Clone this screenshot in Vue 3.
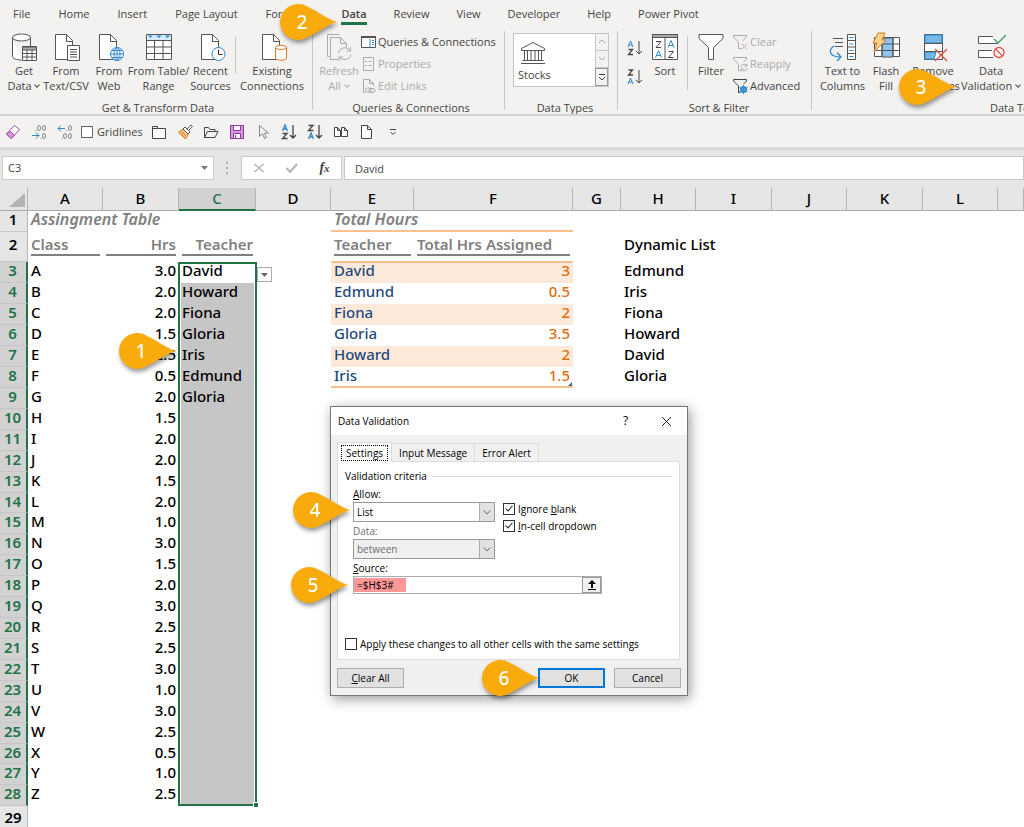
<script setup>
import { ref } from 'vue'

const tabs = ['File', 'Home', 'Insert', 'Page Layout', 'Formulas', 'Data', 'Review', 'View', 'Developer', 'Help', 'Power Pivot']
const activeTab = ref('Data')

const columns = ['A', 'B', 'C', 'D', 'E', 'F', 'G', 'H', 'I', 'J', 'K', 'L', 'M']
const hours = ['3.0', '2.0', '2.0', '1.5', '2.5', '0.5', '2.0', '1.5', '2.0', '2.0', '1.5', '2.0', '1.0', '3.0', '1.5', '2.0', '3.0', '2.5', '2.5', '3.0', '1.0', '3.0', '2.5', '0.5', '1.0', '2.5']
const teachers = ['David', 'Howard', 'Fiona', 'Gloria', 'Iris', 'Edmund', 'Gloria']
const totals = [['David', '3'], ['Edmund', '0.5'], ['Fiona', '2'], ['Gloria', '3.5'], ['Howard', '2'], ['Iris', '1.5']]
const dynamicList = ['Edmund', 'Iris', 'Fiona', 'Howard', 'David', 'Gloria']

const rows = hours.map((hrs, i) => ({
  number: i + 3,
  name: String.fromCharCode(65 + i),
  hrs,
  teacher: teachers[i] || '',
  total: totals[i] || null,
  item: dynamicList[i] || '',
}))

const callouts = [1, 2, 3, 4, 5, 6]
const allow = ref('List')
const operator = ref('between')
const source = ref('=$H$3#')
const ignoreBlank = ref(true)
const inCell = ref(true)
const applyAll = ref(false)
const cellValue = ref('David')
const cellName = ref('C3')
const gridlines = ref(false)
</script>

<template>
  <div class="excel">
    <nav class="tabs">
      <button v-for="t in tabs" :key="t" class="tab" :class="{ active: t === activeTab }" @click="activeTab = t">{{ t }}</button>
    </nav>

    <div class="ribbon">
      <section class="group g-get">
        <div class="tools">
          <button class="big w40">
            <svg width="28" height="28" viewBox="0 0 28 28" fill="none" stroke="#555"><path d="M2.500 4.500v19c0 2 4 3.500 9 3.500" fill="#fff"/><path d="M20.500 4.500v9"/><ellipse cx="11.500" cy="4.500" rx="9" ry="3.500" fill="#fff"/><path d="M12.500 13.500h14v14h-14z" fill="#fff"/><path d="M12.500 14h14v3h-14z" fill="#aaa"/><path d="M12.500 20.500h14M12.500 24h14M17 17v10M22 17v10"/></svg>
            <span>Get<br>Data <i class="chev"></i></span>
          </button>
          <button class="big w44">
            <svg width="28" height="28" viewBox="0 0 28 28" fill="none" stroke="#555"><path d="M3.500 1.500h11l6 6v19h-17z" fill="#fff"/><path d="M14.500 1.500v7h6"/><path d="M15.500 12.500h12v15h-12z" fill="#fff"/><path d="M18 16.500h7M18 19h7M18 21.500h7M18 24h7"/></svg>
            <span>From<br>Text/CSV</span>
          </button>
          <button class="big w42">
            <svg width="28" height="28" viewBox="0 0 28 28" fill="none" stroke="#555"><path d="M4.500 1.500h11l6 6v19h-17z" fill="#fff"/><path d="M15.500 1.500v7h6"/><g stroke="#2b8ad0"><circle cx="22" cy="21" r="6.500" fill="#fff"/><ellipse cx="22" cy="21" rx="3" ry="6.500"/><path d="M22 14.500v13M15.500 21h13M16.500 17.500h11M16.500 24.500h11"/></g></svg>
            <span>From<br>Web</span>
          </button>
          <button class="big w57">
            <svg width="28" height="28" viewBox="0 0 28 28" fill="none" stroke="#555"><path d="M1.500 1.500h25v25h-25z" fill="#fff"/><path d="M2 2h24v5H2z" fill="#d6eaf8" stroke="none"/><path d="M3 2.500h4.500l-2 2.500zM11.500 2.500h5l-2.500 2.500zM20 2.500h5l-2.500 2.500z" fill="#2b8ad0" stroke="none"/><path d="M1.500 7.500h25M1.500 14h25M1.500 20.500h25M9.500 7v19M18 7v19"/></svg>
            <span>From Table/<br>Range</span>
          </button>
          <button class="big w47">
            <svg width="28" height="28" viewBox="0 0 28 28" fill="none" stroke="#555"><path d="M4.500 1.500h11l6 6v19h-17z" fill="#fff"/><path d="M15.500 1.500v7h6"/><circle cx="21.500" cy="21" r="6.500" fill="#fff" stroke="#2b8ad0"/><path d="M21.500 16.500v5h4" stroke="#333"/></svg>
            <span>Recent<br>Sources</span>
          </button>
          <i class="rule"></i>
          <button class="big w68">
            <svg width="28" height="28" viewBox="0 0 28 28" fill="none" stroke="#555"><path d="M4.500 1.500h11l6 6v19h-17z" fill="#fff"/><path d="M15.500 1.500v7h6"/><g stroke="#dd7a26"><path d="M17.500 15v10c0 3 11 3 11 0V15" fill="#fff"/><ellipse cx="23" cy="14.500" rx="5.500" ry="2" fill="#fff"/></g></svg>
            <span>Existing<br>Connections</span>
          </button>
        </div>
        <h2>Get &amp; Transform Data</h2>
      </section>

      <section class="group g-query">
        <div class="tools">
          <button class="big w42" disabled>
            <svg width="28" height="28" viewBox="0 0 28 28" fill="none" stroke="#aaa"><path d="M4.500 23.500h-2v-22h12"/><path d="M5.500 4.500h10l6 6v4M5.500 4.500v22h8" /><path d="M15.500 4.500v6h6M13.500 20c1-6 9-7 12-2v-4m0 4h-4M26 22c-1 5-9 6-12 2v4m0-4h4"/></svg>
            <span>Refresh<br>All <i class="chev"></i></span>
          </button>
          <div class="smalls">
            <button class="small"><svg width="16" height="16" viewBox="0 0 16 16" fill="none" stroke="#555"><path d="M1.500 2.500h14v11h-14z" fill="#fff"/><path d="M1 3h15" stroke-width="2"/><path d="M10 5v8" stroke="#2b8ad0"/><path d="M12 6.500h2M12 8.500h2M12 10.500h2" stroke="#2b8ad0"/></svg>Queries &amp; Connections</button>
            <button class="small" disabled><svg width="16" height="16" viewBox="0 0 16 16" fill="none" stroke="#aaa"><path d="M3.500 1.500h10v13h-10z"/><path d="M5 5.500h2M5 9.500h2M8.500 5.500h3M8.500 9.500h3"/></svg>Properties</button>
            <button class="small" disabled><svg width="16" height="16" viewBox="0 0 16 16" fill="none" stroke="#aaa"><path d="M5 14.500H3.500v-13h6l4 4V8M9.500 1.500v4h4"/><rect x="5.500" y="10" width="6" height="4" rx="2"/><rect x="9" y="10.500" width="6" height="4" rx="2"/></svg>Edit Links</button>
          </div>
        </div>
        <h2>Queries &amp; Connections</h2>
      </section>

      <section class="group g-types">
        <div class="tools">
          <div class="gallery">
            <button class="stocks">
              <svg width="26" height="24" viewBox="0 0 26 24" fill="none" stroke="#555"><path d="M1.500 7.500L13 1.500l11.500 6v2h-23zM4.500 9.500v10M7.500 9.500v10M11 9.500v10M15 9.500v10M18.500 9.500v10M21.500 9.500v10M2.500 19.500h21M1 22.500h24"/></svg>
              <span>Stocks</span>
            </button>
            <div class="steps">
              <button aria-label="Previous"><svg width="8" height="6" viewBox="0 0 8 6" fill="none" stroke="#aaa"><path d="M1 4l3-3 3 3"/></svg></button>
              <button aria-label="Next"><svg width="8" height="6" viewBox="0 0 8 6" fill="none" stroke="#aaa"><path d="M1 1l3 3 3-3"/></svg></button>
              <button aria-label="More" class="more"><svg width="8" height="8" viewBox="0 0 8 8" fill="none" stroke="#444"><path d="M1 1.500h6M1 4l3 3 3-3"/></svg></button>
            </div>
          </div>
        </div>
        <h2>Data Types</h2>
      </section>

      <section class="group g-sort">
        <div class="tools">
          <div class="azs">
            <button aria-label="Sort A to Z"><svg width="16" height="18" viewBox="0 0 16 18" fill="none" stroke="#444"><path d="M1 8l2.500-6L6 8M2 6h3" stroke="#2b8ad0"/><path d="M1.500 10.500h4l-4 5h4.500" stroke-width="1.300"/><path d="M12 2v13M9 12l3 3 3-3"/></svg></button>
            <button aria-label="Sort Z to A"><svg width="16" height="18" viewBox="0 0 16 18" fill="none" stroke="#444"><path d="M1.500 2h4l-4 5h4.500" stroke-width="1.300"/><path d="M1 16l2.500-6L6 16M2 14h3" stroke="#2b8ad0"/><path d="M12 2v13M9 12l3 3 3-3"/></svg></button>
          </div>
          <button class="big w42">
            <svg width="28" height="28" viewBox="0 0 28 28" fill="none" stroke="#555"><path d="M1.500 1.500h25v25h-25z" fill="#fff"/><path d="M1.500 1.500h25v3h-25z" fill="#aaa"/><path d="M14 5v21"/><path d="M5 8.500h5l-5 6h5M17.500 18.500h5l-5 6h5" stroke="#444"/><path d="M4.500 24.500l3-7 3 7M5.500 22.500h4M17 14.500l3-7 3 7M18 12.500h4" stroke="#2b8ad0"/></svg>
            <span>Sort</span>
          </button>
          <i class="rule tall"></i>
          <button class="big w42">
            <svg width="28" height="28" viewBox="0 0 28 28" fill="none" stroke="#555"><path d="M2 1.500h24v4l-9.500 9v12h-5v-12L2 5.500z" fill="#fff"/></svg>
            <span>Filter</span>
          </button>
          <div class="smalls">
            <button class="small" disabled><svg width="16" height="16" viewBox="0 0 16 16" fill="none" stroke="#aaa"><path d="M9.500 14.500h-3V8l-5-5V1.500h13V3l-4 4"/><path d="M10 10l5 5M15 10l-5 5"/></svg>Clear</button>
            <button class="small" disabled><svg width="16" height="16" viewBox="0 0 16 16" fill="none" stroke="#aaa"><path d="M7.500 14.500h-1V8l-5-5V1.500h13V3l-3 3"/><path d="M9 11c1-4 5-3 6-1V7.500M15 10h-2.500M15 12c-1 4-5 3-6 1v2.500M9 13h2.500"/></svg>Reapply</button>
            <button class="small"><svg width="16" height="16" viewBox="0 0 16 16" fill="none" stroke="#444"><path d="M6.500 14.500V8l-5-5V1.500h13V3l-3 3M6.500 14.500h2"/><circle cx="11.500" cy="11.500" r="2.500" stroke="#2b8ad0" stroke-width="2"/><path d="M11.500 7v9M7.500 9.500l8 4M7.500 13.500l8-4" stroke="#2b8ad0"/></svg>Advanced</button>
          </div>
        </div>
        <h2>Sort &amp; Filter</h2>
      </section>

      <section class="group g-tools">
        <div class="tools">
          <button class="big w47">
            <svg width="28" height="28" viewBox="0 0 28 28" fill="none" stroke="#555"><path d="M18.500 1.500h8v25h-8zM18.500 7.500h8M18.500 14h8M18.500 20.500h8" fill="#fff"/><path d="M20.500 4.500h4M20.500 11h4M20.500 17.500h4M20.500 23.500h4" stroke="#2b8ad0"/><path d="M4 5.500h10M6 9.500h8M6 13.500h8"/><path d="M5 13C-1 17 0 24 12 24M8 19.500l4 4.500-4 4" stroke="#2b8ad0" stroke-width="1.300"/></svg>
            <span>Text to<br>Columns</span>
          </button>
          <button class="big w40">
            <svg width="28" height="28" viewBox="0 0 28 28" fill="none" stroke="#555"><path d="M2.500 4.500h25v19h-25z" fill="#fff"/><path d="M10 5h11v19H10z" fill="#8fc5ee"/><path d="M2.500 11h25M2.500 17.500h25M10 5v19M21 5v19"/><path d="M6 0h7l-3 7h4L2 19l3-9H1z" fill="#fcd58a" stroke="#dd7a26"/></svg>
            <span>Flash<br>Fill</span>
          </button>
          <button class="big w54">
            <svg width="28" height="28" viewBox="0 0 28 28" fill="none" stroke="#555"><path d="M5.500 1.500h18v25h-18z" fill="#fff"/><path d="M6 2h17v8H6zM6 19h11l-2 7H6z" fill="#77b7e8" stroke="#2b8ad0"/><path d="M5.500 10.500h18M5.500 18.500h18"/><path d="M16 16l12 12M28 16L16 28" stroke="#e05247" stroke-width="1.400"/></svg>
            <span>Remove<br>Duplicates</span>
          </button>
          <button class="big w62">
            <svg width="28" height="28" viewBox="0 0 28 28" fill="none" stroke="#555"><path d="M16 3.500H1.500v7h19V9M15 17.500H1.500v7H16" fill="#fff"/><path d="M17 6l4 4 8-8" stroke="#3f9d68" stroke-width="1.300"/><circle cx="22" cy="19.500" r="5" stroke="#e05247" fill="#fff" stroke-width="1.300"/><path d="M18.500 16l7 7" stroke="#e05247" stroke-width="1.300"/></svg>
            <span>Data<br>Validation <i class="chev"></i></span>
          </button>
        </div>
        <h2>Data Tools</h2>
      </section>
    </div>

    <div class="qat">
      <button aria-label="Eraser"><svg width="16" height="16" viewBox="0 0 16 16" fill="none" stroke="#a347ad"><path d="M1.500 10l8-8.500 5 4-8 9z" fill="#fff"/><path d="M1.500 10l3-3 5 4-3 3.500z" fill="#d59adb"/></svg></button>
      <button aria-label="Decrease decimal"><svg width="16" height="16" viewBox="0 0 16 16" fill="none" stroke="#888"><ellipse cx="8" cy="4" rx="1.500" ry="2.500"/><ellipse cx="13" cy="4" rx="1.500" ry="2.500"/><ellipse cx="13" cy="12" rx="1.500" ry="2.500"/><path d="M4.500 6.500h1M9.500 14.500h1"/><path d="M1 11.500h7M5 8.500l3 3-3 3" stroke="#2b8ad0"/></svg></button>
      <button aria-label="Increase decimal"><svg width="16" height="16" viewBox="0 0 16 16" fill="none" stroke="#888"><ellipse cx="13" cy="4" rx="1.500" ry="2.500"/><ellipse cx="8" cy="12" rx="1.500" ry="2.500"/><ellipse cx="13" cy="12" rx="1.500" ry="2.500"/><path d="M4.500 14.500h1M9.500 6.500h1"/><path d="M1 4.500h7M4 1.500l-3 3 3 3" stroke="#2b8ad0"/></svg></button>
      <label class="gridlines"><input v-model="gridlines" type="checkbox">Gridlines</label>
      <button aria-label="Folder"><svg width="16" height="16" viewBox="0 0 16 16" fill="none" stroke="#444"><path d="M1.500 14.500v-12h5v2h8v10z" fill="#fff"/><path d="M1.500 4.500h5"/></svg></button>
      <button aria-label="Format painter"><svg width="16" height="16" viewBox="0 0 16 16" fill="none" stroke="#555"><path d="M1.500 8l5-3 5 5-3 5z" fill="#fbc37b" stroke="#dd7a26"/><path d="M3 9l5 5M5 7.500l4 4.500" stroke="#dd7a26"/><path d="M6 5l2-2 5 5-2 2zM10 5l4-4 1.500 1.500-4 4" fill="#fff"/></svg></button>
      <button aria-label="Open"><svg width="16" height="16" viewBox="0 0 16 16" fill="none" stroke="#444"><path d="M1.500 13.500v-10h4l1.500 2h5v2M1.500 13.500l3-6h10.500l-3 6z"/></svg></button>
      <button aria-label="Save"><svg width="16" height="16" viewBox="0 0 16 16" fill="#d59adb" stroke="#8f3a99"><path d="M1.500 1.500h13v13h-13z"/><path d="M4.500 1.500h7v5h-7zM4.500 9.500h7v5h-7z" fill="#fff"/><path d="M6.500 11v3"/></svg></button>
      <button aria-label="Select"><svg width="16" height="16" viewBox="0 0 16 16" fill="none" stroke="#888"><path d="M4.500 1.500v11l3-3 2 5 2-1-2-4.500h4z"/></svg></button>
      <button aria-label="Sort ascending"><svg width="16" height="16" viewBox="0 0 16 16" fill="none" stroke="#444"><path d="M1.500 7L4 1l2.500 6M2.500 5h3" stroke="#2b8ad0" stroke-width="1.300"/><path d="M1.500 9.500h4.500l-4.500 5h5M12 1v13M9 11l3 3 3-3" stroke-width="1.300"/></svg></button>
      <button aria-label="Sort descending"><svg width="16" height="16" viewBox="0 0 16 16" fill="none" stroke="#444"><path d="M1.500 15L4 9l2.500 6M2.500 13h3" stroke="#2b8ad0" stroke-width="1.300"/><path d="M1.500 1.500h4.500l-4.500 5h5M12 1v13M9 11l3 3 3-3" stroke-width="1.300"/></svg></button>
      <button aria-label="Compare"><svg width="16" height="16" viewBox="0 0 16 16" fill="#fff" stroke="#444"><path d="M1.500 3.500h3l3 3v6h-6zM8.500 3.500h3l3 3v6h-6zM4.500 3.500v3h3M11.500 3.500v3h3"/></svg></button>
      <button aria-label="New"><svg width="16" height="16" viewBox="0 0 16 16" fill="#fff" stroke="#444"><path d="M2.500 1.500h6l4 4v9h-10zM8.500 1.500v4h4"/></svg></button>
      <button aria-label="Customize"><svg width="8" height="8" viewBox="0 0 8 8" fill="none" stroke="#444"><path d="M1 1.500h6M1.500 4l2.500 2.500L6.500 4"/></svg></button>
    </div>

    <div class="formula">
      <div class="namebox">
        <input v-model="cellName" aria-label="Name box">
        <svg width="7" height="4" viewBox="0 0 7 4" fill="#777"><path d="M0 0h7L3.500 4z"/></svg>
      </div>
      <svg class="grip" width="3" height="12" viewBox="0 0 3 12" fill="#aaa"><path d="M0 0h2v2H0zM0 5h2v2H0zM0 10h2v2H0z"/></svg>
      <div class="fxbox">
        <button aria-label="Cancel entry"><svg width="12" height="12" viewBox="0 0 12 12" fill="none" stroke="#b5b5b5" stroke-width="1.500"><path d="M1.500 2l9 8M10.500 2l-9 8"/></svg></button>
        <button aria-label="Enter"><svg width="14" height="12" viewBox="0 0 14 12" fill="none" stroke="#b5b5b5" stroke-width="2"><path d="M1.500 6l3.500 4 7-8"/></svg></button>
        <button class="fx" aria-label="Insert function">f<small>x</small></button>
      </div>
      <input v-model="cellValue" class="value" aria-label="Formula bar">
    </div>

    <table class="sheet">
      <colgroup>
        <col class="c-num"><col class="c-75"><col class="c-76"><col class="c-77"><col class="c-75"><col class="c-83"><col class="c-159"><col class="c-48"><col class="c-75"><col class="c-76"><col class="c-75"><col class="c-76"><col class="c-75"><col>
      </colgroup>
      <thead>
        <tr>
          <th class="corner"><svg width="16" height="14" viewBox="0 0 16 14" fill="#b4b4b4"><path d="M16 0v14H0z"/></svg></th>
          <th v-for="c in columns" :key="c" :class="{ on: c === 'C' }">{{ c === 'M' ? '' : c }}</th>
        </tr>
      </thead>
      <tbody>
        <tr class="title-row">
          <th>1</th>
          <td colspan="4" class="title">Assingment Table</td>
          <td colspan="2" class="title total-title">Total Hours</td>
          <td colspan="7"></td>
        </tr>
        <tr class="head-row">
          <th>2</th>
          <td class="head"><span>Class</span></td>
          <td class="head num"><span>Hrs</span></td>
          <td class="head num"><span>Teacher</span></td>
          <td></td>
          <td class="head"><span>Teacher</span></td>
          <td class="head"><span>Total Hrs Assigned</span></td>
          <td></td>
          <td>Dynamic List</td>
          <td colspan="5"></td>
        </tr>
        <tr v-for="(r, i) in rows" :key="r.number" :class="{ short: i % 12 === 11 }">
          <th class="on">{{ r.number }}</th>
          <td>{{ r.name }}</td>
          <td class="num">{{ r.hrs }}</td>
          <td class="sel" :class="{ first: i === 0, last: i === rows.length - 1 }">
            {{ r.teacher }}
            <button v-if="i === 0" class="drop" aria-label="Open list"><svg width="7" height="4" viewBox="0 0 7 4" fill="#666"><path d="M0 0h7L3.500 4z"/></svg></button>
            <i v-if="i === rows.length - 1" class="handle"></i>
          </td>
          <td></td>
          <template v-if="r.total">
            <td class="who" :class="{ band: i % 2 === 0, top: i === 0, bottom: i === 5 }">{{ r.total[0] }}</td>
            <td class="sum" :class="{ band: i % 2 === 0, top: i === 0, bottom: i === 5 }">{{ r.total[1] }}</td>
          </template>
          <td v-else colspan="2"></td>
          <td></td>
          <td>{{ r.item }}</td>
          <td colspan="5"></td>
        </tr>
        <tr class="tail-row"><th>29</th><td colspan="13"></td></tr>
      </tbody>
    </table>

    <section class="dialog" role="dialog" aria-label="Data Validation">
      <header>
        <span>Data Validation</span>
        <button aria-label="Help">?</button>
        <button aria-label="Close"><svg width="11" height="11" viewBox="0 0 11 11" fill="none" stroke="#222"><path d="M1 1l9 9M10 1l-9 9"/></svg></button>
      </header>
      <div class="dtabs">
        <button class="current"><span>Settings</span></button>
        <button>Input Message</button>
        <button>Error Alert</button>
      </div>
      <div class="panel">
        <div class="criteria"><span>Validation criteria</span></div>
        <div class="fields">
          <div class="left">
            <label for="allow"><u>A</u>llow:</label>
            <div class="combo">
              <select id="allow" v-model="allow"><option>List</option><option>Any value</option></select>
              <svg width="15" height="17" viewBox="0 0 15 17" fill="none" stroke="#555"><path d="M4 7l3.500 3.500L11 7"/></svg>
            </div>
            <label for="operator" class="dim">Data:</label>
            <div class="combo">
              <select id="operator" v-model="operator" disabled><option>between</option></select>
              <svg width="15" height="17" viewBox="0 0 15 17" fill="none" stroke="#555"><path d="M4 7l3.500 3.500L11 7"/></svg>
            </div>
          </div>
          <div class="right">
            <label class="check"><input v-model="ignoreBlank" type="checkbox"><span>Ignore <u>b</u>lank</span></label>
            <label class="check"><input v-model="inCell" type="checkbox"><span><u>I</u>n-cell dropdown</span></label>
          </div>
        </div>
        <div class="source">
          <label for="source"><u>S</u>ource:</label>
          <div class="range">
            <input id="source" v-model="source">
            <button aria-label="Select range"><svg width="10" height="11" viewBox="0 0 10 11" fill="#000"><path d="M5 0l4 4H6v4H4V4H1zM1 9h8v1H1z"/></svg></button>
          </div>
        </div>
        <label class="check apply"><input v-model="applyAll" type="checkbox"><span>Ap<u>p</u>ly these changes to all other cells with the same settings</span></label>
      </div>
      <footer>
        <button><u>C</u>lear All</button>
        <button class="ok">OK</button>
        <button>Cancel</button>
      </footer>
    </section>

    <div v-for="n in callouts" :key="n" class="callout" :class="'n' + n">
      <svg width="57" height="36" viewBox="0 0 57 36" fill="#f9ab0b"><path d="M57 18C47 15 37 7 28 3A18 18 0 1 0 28 33C37 29 47 21 57 18z"/></svg>
      <span>{{ n }}</span>
    </div>
  </div>
</template>

<style>
html, body { margin: 0; overflow: hidden; }
</style>

<style scoped>
.excel { position: relative; height: 100vh; overflow: hidden; background: #fff; color: #444; font: 11px/14px "Open Sans", "Noto Sans", sans-serif; }
.excel * { box-sizing: border-box; }
button, input, select { font: inherit; color: inherit; margin: 0; padding: 0; border: 0; background: none; border-radius: 0; outline: 0; }
button { white-space: nowrap; }
svg { display: block; flex: none; overflow: visible; }

.tabs { display: flex; gap: 28px; height: 30px; padding: 3px 13px 0; background: #f3f2f1; }
.tab { height: 22px; border-bottom: 3px solid transparent; padding-top: 2px; line-height: 17px; }
.tab.active { border-color: #217346; font-weight: 600; }
.tab.active ~ .tab { margin-left: -1px; }

.ribbon { display: flex; height: 86px; background: #f3f2f1; border-bottom: 2px solid #d4d4d4; overflow: hidden; }
.group { flex: none; display: flex; flex-direction: column; margin: 1px 0 4px; border-right: 1px solid #c8c8c8; }
.group h2 { margin: 0; font: inherit; text-align: center; line-height: 12px; white-space: nowrap; }
.tools { display: flex; height: 71px; flex: none; }
.g-get { width: 313px; padding-left: 4px; }
.g-query { width: 192px; padding-left: 5px; }
.g-types { width: 113px; padding-left: 8px; }
.g-sort { width: 194px; padding-left: 9px; }
.g-tools { flex: 1; min-width: 212px; padding-left: 7px; border: 0; }
.g-tools h2 { padding-left: 171px; text-align: left; }
.big { flex: none; display: flex; flex-direction: column; align-items: center; gap: 2px; padding-top: 2px; }
.big span { line-height: 15px; }
button:disabled { color: #aaa; }
.w40 { width: 40px; } .w42 { width: 42px; } .w44 { width: 44px; } .w47 { width: 47px; }
.w54 { width: 54px; } .w57 { width: 57px; } .w62 { width: 62px; } .w68 { width: 68px; }
.chev { display: inline-block; width: 4px; height: 4px; margin: 0 1px 3px; border: solid currentColor; border-width: 0 1px 1px 0; transform: rotate(45deg); }
.rule { width: 1px; height: 38px; margin: 5px 2px 0 1px; background: #c8c8c8; }
.rule.tall { height: 54px; }
.smalls { display: flex; flex-direction: column; }
.small { display: flex; align-items: center; gap: 2px; height: 22px; padding-bottom: 1px; }
.gallery { display: flex; width: 96px; height: 54px; margin-top: 2px; border: 1px solid #c6c6c6; background: #fff; }
.stocks { flex: 1; display: flex; flex-direction: column; align-items: flex-start; padding: 7px 4px 0; gap: 3px; }
.stocks svg { margin-left: 2px; }
.steps { width: 13px; display: flex; flex-direction: column; }
.steps button { flex: 1; display: flex; align-items: center; justify-content: center; background: #f3f2f1; border-left: 1px solid #c6c6c6; border-bottom: 1px solid #c6c6c6; }
.steps .more { border: 1px solid #999; }
.azs { display: flex; flex-direction: column; width: 17px; gap: 11px; padding-top: 8px; }

.qat { display: flex; align-items: center; height: 34px; background: #f3f2f1; border-bottom: 3px solid #d8d8d8; }
.qat button { flex: none; width: 26px; display: flex; justify-content: center; }
.gridlines { width: 68px; display: flex; align-items: center; gap: 4px; padding-left: 3px; }
.gridlines input { appearance: none; width: 12px; height: 12px; border: 1px solid #666; background: #fff; }

.formula { display: flex; align-items: center; height: 38px; padding: 0 0 2px 2px; background: #e6e6e6; }
.namebox { display: flex; align-items: center; width: 212px; height: 24px; padding: 0 5px; background: #fff; border: 1px solid #c8c8c8; }
.namebox input { flex: 1; min-width: 0; }
.grip { margin: 0 12px; }
.fxbox { display: flex; align-items: center; width: 101px; height: 24px; background: #fff; border: 1px solid #c8c8c8; }
.fxbox button { flex: 1; display: flex; justify-content: center; }
.fxbox .fx { display: block; font: italic 700 14px/20px "Liberation Serif", serif; }
.fx small { font-size: 11px; }
.value { flex: 1; min-width: 0; height: 24px; margin-left: 2px; padding: 0 10px; background: #fff; border: 1px solid #c8c8c8; }

.sheet { width: 100%; table-layout: fixed; border-spacing: 0; color: #000; font: 500 15px/17px "Noto Sans", "Open Sans", sans-serif; }
.c-num { width: 28px; } .c-48 { width: 48px; } .c-75 { width: 75px; } .c-76 { width: 76px; } .c-77 { width: 77px; } .c-83 { width: 83px; } .c-159 { width: 159px; }
th { padding: 0 1px 0 0; font-weight: 600; text-align: center; background: #e6e6e6; border-right: 1px solid #b4b4b4; }
thead th { height: 23px; padding: 0 0 1px; font-weight: 500; border-bottom: 1px solid #ababab; }
thead th.on { color: #217346; background: #d2d2d2; border-bottom: 2px solid #217346; }
.corner svg { margin: 3px 0 0 9px; }
tbody th { border-bottom: 1px solid #c6c6c6; vertical-align: top; }
tbody th.on { color: #217346; background: #d2d2d2; border-right: 2px solid #217346; }
td { position: relative; height: 21px; padding: 0 3px; vertical-align: top; white-space: nowrap; }
.short td { height: 20px; }
.num, .sum { text-align: right; }
.title { color: #808080; font-size: 16px; font-weight: 600; font-style: italic; }
.total-title { border-bottom: 2px solid #fac090; }
.title-row td { height: 21px; }
.head-row td { height: 30px; padding-top: 4px; }
.head-row th { padding-top: 4px; }
.head { color: #808080; font-weight: 600; }
.head span { display: block; height: 20px; border-bottom: 2px solid #808080; }
.who { color: #1f497d; }
.sum { color: #e46c0a; }
.band { background: #fde9d9; }
.top { box-shadow: 0 -1px #fac090, inset 0 1px #fac090; }
.bottom { border-bottom: 2px solid #fac090; }
.sum.bottom::after { content: ""; position: absolute; right: 1px; bottom: 0; border: 2px solid #3465a4; border-top-color: transparent; border-left-color: transparent; }
.sel { background: #c6c6c6; }
.sel.first { background: #fff; }
.sel::before { content: ""; position: absolute; inset: 0 -1px; border: solid #217346; border-width: 0 2px; box-shadow: inset 1px 0 #fff, inset -1px 0 #fff; }
.sel.first::before { border-top-width: 2px; }
.sel.last::before { border-bottom-width: 2px; }
.drop { position: absolute; z-index: 1; left: 78px; top: 5px; width: 15px; height: 15px; display: flex; align-items: center; justify-content: center; background: #fff; border: 1px solid #ababab; }
.handle { position: absolute; right: -2px; bottom: -1px; width: 5px; height: 5px; background: #217346; border: solid #fff; border-width: 1px 0 0 1px; }
.tail-row th { padding-top: 3px; border-bottom: 0; }

.dialog { position: absolute; left: 330px; top: 406px; width: 358px; color: #000; font-size: 10px; line-height: 14px; background: #f0f0f0; border: 1px solid #777; box-shadow: 2px 3px 12px rgba(0, 0, 0, .4); }
.dialog header { display: flex; align-items: center; height: 28px; padding: 0 7px; background: #fff; }
.dialog header span { flex: 1; }
.dialog header button { width: 41px; display: flex; justify-content: center; font-size: 12px; }
.dialog header button:last-child { margin-right: -7px; }
.dtabs { display: flex; align-items: flex-end; height: 26px; padding: 0 6px; }
.dtabs button { height: 18px; padding: 0 7px; border: 1px solid #dcdcdc; border-bottom: 0; border-left: 0; }
.dtabs .current { position: relative; height: 20px; margin-bottom: -1px; padding: 0 3px; background: #fff; border-left: 1px solid #dcdcdc; }
.current span { display: block; padding: 0 4px; border: 1px dotted #000; }
.panel { height: 199px; margin: 0 7px 0 6px; padding: 7px 6px 0 7px; background: #fff; border: 1px solid #dcdcdc; }
.criteria { display: flex; align-items: center; gap: 5px; }
.criteria::after { content: ""; flex: 1; height: 1px; background: #dcdcdc; }
.fields { display: flex; gap: 8px; padding: 4px 0 0 8px; }
.left { width: 142px; }
.left label, .source label { display: block; height: 15px; }
.dim { color: #6d6d6d; margin-top: 2px; }
.combo { position: relative; height: 20px; }
.combo select { appearance: none; width: 100%; height: 20px; padding: 0 3px; background: #fff; border: 1px solid #999; }
.combo select:disabled { color: #6d6d6d; opacity: 1; background: #f0f0f0; }
.combo svg { position: absolute; right: 1px; top: 1px; height: 18px; background: #e1e1e1; border-left: 1px solid #adadad; }
.right { display: flex; flex-direction: column; gap: 3px; padding-top: 15px; }
.check { display: flex; align-items: center; gap: 3px; }
.check input { appearance: none; position: relative; width: 12px; height: 12px; border: 1px solid #333; background: #fff; }
.check input:checked::before { content: ""; position: absolute; left: 3px; top: 0; width: 3px; height: 6px; border: solid #222; border-width: 0 1px 1px 0; transform: rotate(40deg); }
.source { padding: 2px 0 0 8px; }
.range { display: flex; width: 249px; height: 18px; border: 1px solid #adadad; }
.range input { flex: 1; min-width: 0; padding: 0 3px; background: linear-gradient(#ff9797, #ff9797) 0 1px / 52px 14px no-repeat #fff; }
.range button { width: 19px; display: flex; align-items: center; justify-content: center; background: #f0f0f0; border: 1px solid #999; }
.apply { margin-top: 43px; }
.dialog footer { display: flex; gap: 9px; padding: 8px 6px 7px; }
.dialog footer button { width: 67px; height: 20px; background: #e1e1e1; border: 1px solid #adadad; }
.dialog footer .ok { margin-left: auto; border: 2px solid #0078d7; }

.callout { position: absolute; width: 57px; height: 36px; color: #fff; font: 500 19px/36px "Noto Sans", "Open Sans", sans-serif; filter: drop-shadow(1px 3px 2px rgba(0, 0, 0, .4)); }
.callout svg { position: absolute; left: 0; top: 0; }
.callout span { position: absolute; left: 0; width: 44px; text-align: center; }
.n1 { left: 119px; top: 333px; }
.n2 { left: 280px; top: 4px; }
.n3 { left: 899px; top: 69px; }
.n4 { left: 293px; top: 492px; }
.n5 { left: 291px; top: 567px; }
.n6 { left: 482px; top: 660px; }
</style>
